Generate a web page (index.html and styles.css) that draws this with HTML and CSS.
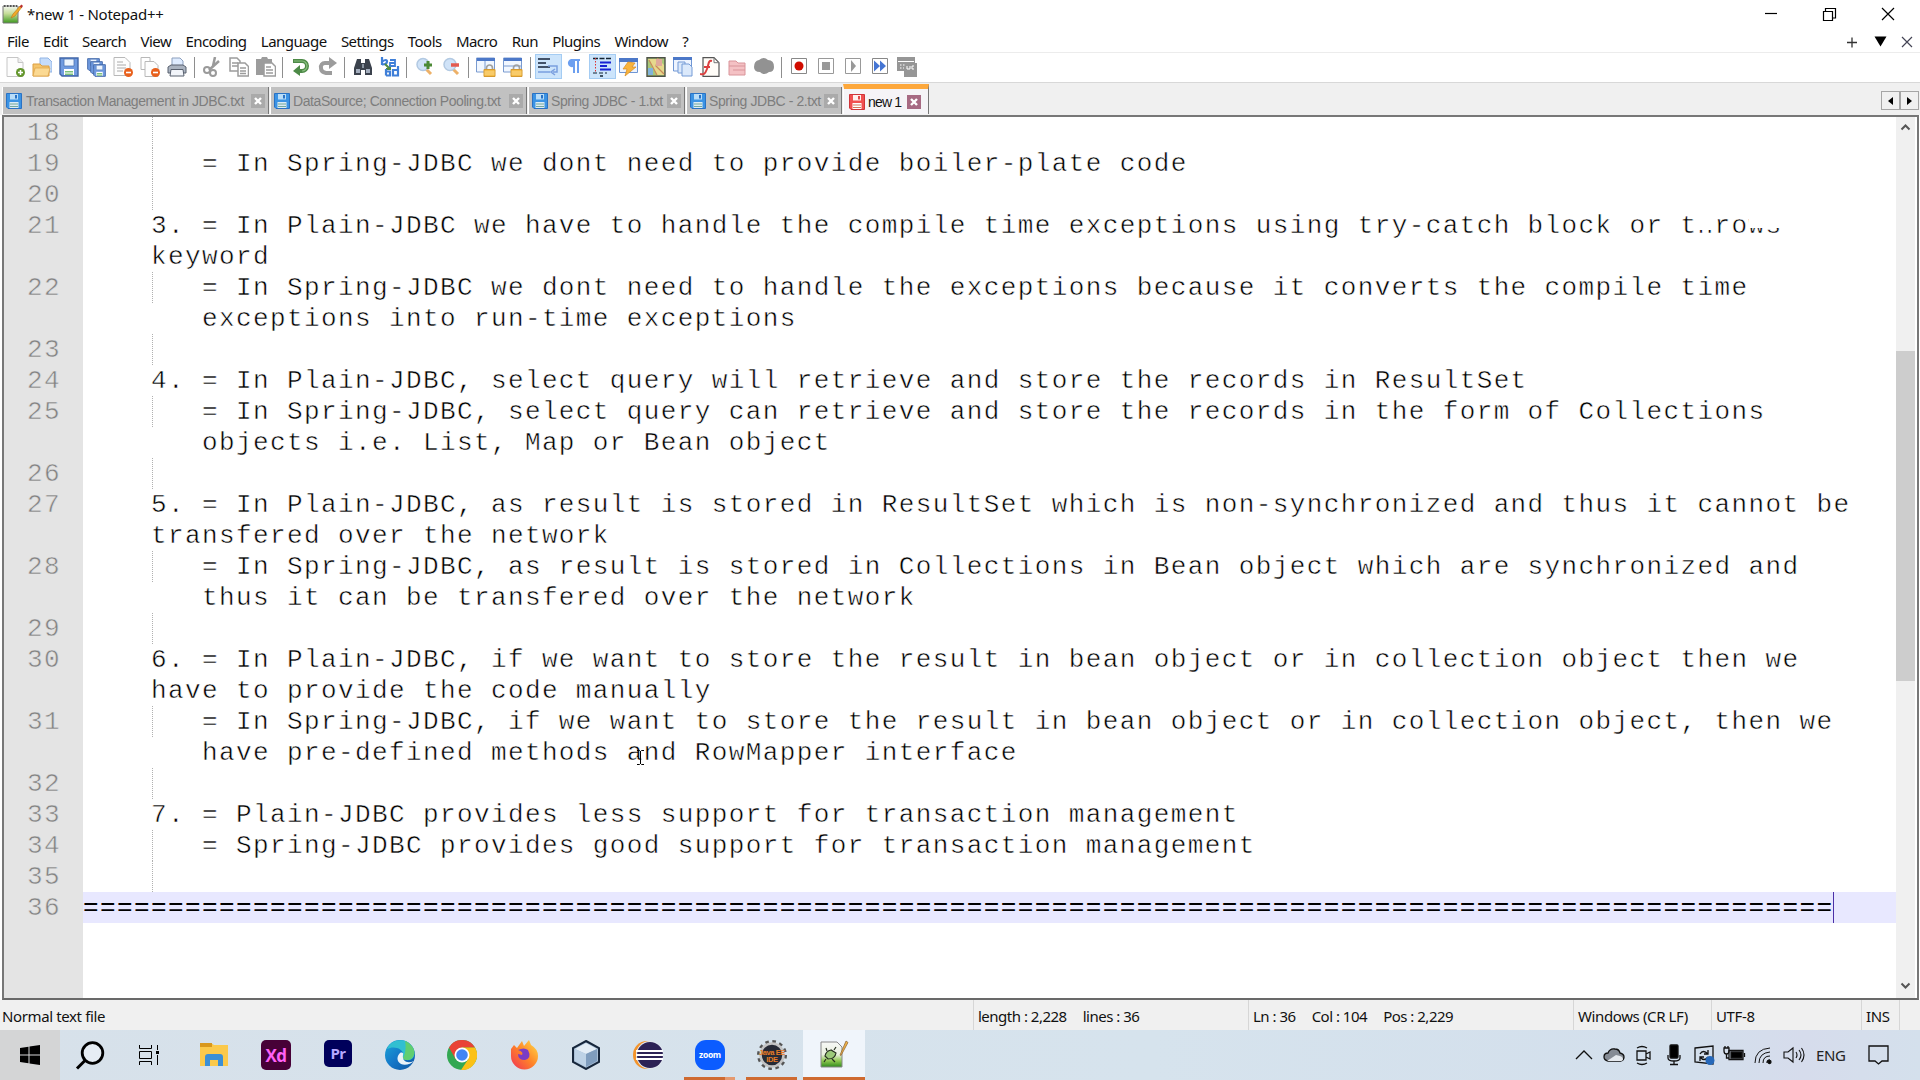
FILE: index.html
```html
<!DOCTYPE html>
<html lang="en">
<head>
<meta charset="utf-8">
<title>*new 1 - Notepad++</title>
<link rel="stylesheet" href="styles.css">
</head>
<body>
<svg class="defs" width="0" height="0">
  <defs>
    <linearGradient id="gGreen" x1="0" y1="0" x2="0" y2="1"><stop offset="0" stop-color="#f4f7f2"/><stop offset=".45" stop-color="#c5dc98"/><stop offset="1" stop-color="#3f9a20"/></linearGradient>
    <linearGradient id="gPage" x1="0" y1="0" x2="0" y2="1"><stop offset="0" stop-color="#f6f8f6"/><stop offset=".5" stop-color="#eaf0e0"/><stop offset=".75" stop-color="#8fc850"/><stop offset="1" stop-color="#2f8a1c"/></linearGradient>
    <linearGradient id="gEdge" x1="0" y1="0" x2="1" y2="1"><stop offset="0" stop-color="#1aa6d8"/><stop offset=".5" stop-color="#1577c8"/><stop offset="1" stop-color="#0d55a0"/></linearGradient>
    <linearGradient id="gFox" x1="1" y1="0" x2="0" y2="1"><stop offset="0" stop-color="#ffe04a"/><stop offset=".5" stop-color="#ff8428"/><stop offset="1" stop-color="#f03058"/></linearGradient>
    <symbol id="floppy" viewBox="0 0 20 20"><path d="M1 1h18v18H3l-2-2z" fill="#6f9ae0" stroke="#4066a8" stroke-width="1.4"/><path d="M5 2h10v7H5z" fill="#eef5fd" stroke="#4c73b5" stroke-width=".8"/><path d="M5 12h10v6H5z" fill="#fff"/><path d="M6 14h8v1.6H6zM6 16.5h8V18H6z" fill="#7cc17a"/></symbol>
    <symbol id="tabsave" viewBox="0 0 16 16"><path d="M.5.5h15v15H2l-1.500-1.500z" fill="#3b93e4" stroke="#2a72c4"/><path d="M4 1h8v5.500H4z" fill="#b9ddf8"/><path d="M9 2h2v3.500H9z" fill="#2a72c4"/><path d="M3.500 9h9v6h-9z" fill="#dcebf5"/><path d="M4 10.500h8v1H4zm0 2.500h8v1H4z" fill="#72a99c"/></symbol>
    <symbol id="tabdirty" viewBox="0 0 16 16"><path d="M.5.5h15v15H2l-1.500-1.500z" fill="#f05050" stroke="#d03438"/><path d="M4 1h8v5.500H4z" fill="#fff0ee"/><path d="M9 2h2v3.500H9z" fill="#e04848"/><path d="M3.500 9h9v6h-9z" fill="#fff"/><path d="M4 10.500h8v1H4zm0 2.500h8v1H4z" fill="#d2785c"/></symbol>
    <symbol id="cross" viewBox="0 0 14 14"><path d="M4 4l6 6m0-6l-6 6" stroke="#fff" stroke-width="2.400"/></symbol>
    <symbol id="lock" viewBox="0 0 12 13"><path d="M3 6V4a3 3 0 0 1 6 0v2" fill="none" stroke="#a0a0a0" stroke-width="1.700"/><path d="M.5 5.500h11v7H.5z" fill="#f5bd48" stroke="#d59a31"/><path d="M1 8h10M1 10h10" stroke="#fbd98b"/></symbol>
  </defs>
</svg>

<header class="titlebar">
  <svg class="app-icon" width="21" height="21" viewBox="0 0 21 21"><path d="M1 2h15v17H1z" fill="url(#gGreen)" stroke="#777"/><path d="M2 2h13" stroke="#555" stroke-width="2" stroke-dasharray="1.500 1.500"/><path d="M9 14l2-4 7-8 2 1-7 9z" fill="#f1aa29" stroke="#b97617" stroke-width=".6"/><path d="M17.500 2.500l2-2 1.500 1.500-1.500 2z" fill="#b93030"/></svg>
  <span class="title">*new 1 - Notepad++</span>
  <svg class="winctl" width="132" height="16" viewBox="0 0 132 16" fill="none" stroke="#000" stroke-width="1.200"><path d="M1 7.500h12"/><path d="M59.500 5.500h9v9h-9zM61.500 5.500v-3h10v9.500h-3"/><path d="M118 2l12 12m0-12l-12 12"/></svg>
</header>

<nav class="menubar">
  <span>File</span><span>Edit</span><span>Search</span><span>View</span><span>Encoding</span><span>Language</span><span>Settings</span><span>Tools</span><span>Macro</span><span>Run</span><span>Plugins</span><span>Window</span><span>?</span>
  <svg class="docctl" width="68" height="14" viewBox="0 0 68 14"><path d="M2 7.500h10m-5-5v10" stroke="#333" stroke-width="1.300"/><path d="M29.500 1.500h12l-6 10z"/><path d="M57 2l10 10m0-10L57 12" stroke="#445" stroke-width="1.200"/></svg>
</nav>

<div class="toolbar">
  <i><svg viewBox="0 0 20 20"><path d="M2 .5h11l5 5v14H2z" fill="#fdfdfd" stroke="#c6c6c6"/><path d="M13 .5v5h5" fill="#eee" stroke="#c6c6c6"/><circle cx="15.500" cy="15.500" r="4.500" fill="#63962c"/><path d="M15.500 13v5m-2.500-2.500h5" stroke="#fff" stroke-width="1.500"/></svg></i>
  <i><svg viewBox="0 0 20 20"><path d="M8 1h8l4 4v10H8z" fill="#c5dcfa" stroke="#92b4e4"/><path d="M1 7h7l2 2h7v10H1z" fill="#f4c56c" stroke="#dda043"/><path d="M1 19l2-8h15l-2 8z" fill="#fbd992" stroke="#dda043" stroke-width=".7"/></svg></i>
  <i><svg viewBox="0 0 20 20"><use href="#floppy"/></svg></i>
  <i><svg viewBox="0 0 20 20"><use href="#floppy" x="1" y="1" width="13" height="13"/><use href="#floppy" x="4" y="4" width="13" height="13"/><use href="#floppy" x="7" y="7" width="13" height="13"/></svg></i>
  <i><svg viewBox="0 0 20 20"><path d="M1 .5h11l5 5v13H1z" fill="#fdfdfd" stroke="#b8b8b8"/><path d="M4 5h6M4 8h9M4 11h9M4 14h6" stroke="#aaa"/><circle cx="15.500" cy="15.500" r="4.500" fill="#e8601c"/><path d="M13 15.500h5" stroke="#fff" stroke-width="1.600"/></svg></i>
  <i><svg viewBox="0 0 20 20"><path d="M1 .5h9v12H1z" fill="#fff" stroke="#b8b8b8"/><path d="M5 4.500h9l4 4v11H5z" fill="#fdfdfd" stroke="#b8b8b8"/><circle cx="15.500" cy="15.500" r="4.500" fill="#e8601c"/><path d="M13 15.500h5" stroke="#fff" stroke-width="1.600"/></svg></i>
  <i><svg viewBox="0 0 20 20"><path d="M5 9V1h8l3 3v5" fill="#dfecff" stroke="#8c9fbd"/><path d="M1 10l3-2h12l3 2v6H1z" fill="#aab3c0" stroke="#59616f"/><path d="M4 12.500h12l1 6.500H3z" fill="#f2f5fa" stroke="#59616f"/></svg></i>
  <b></b>
  <i><svg viewBox="0 0 20 20"><path d="M13 0l-2 9m6-5L7 13" stroke="#9a9a9a" stroke-width="2.500" fill="none"/><circle cx="5" cy="13" r="3" fill="none" stroke="#9a9a9a" stroke-width="2"/><circle cx="11" cy="16" r="3" fill="none" stroke="#9a9a9a" stroke-width="2"/></svg></i>
  <i><svg viewBox="0 0 20 20" fill="#fff" stroke="#9c9c9c" stroke-width="1.500"><path d="M1 1h7l3 3v10H1z"/><path d="M3 6h6M3 9h6"/><path d="M9 6h7l3.500 3.500V19H9z"/><path d="M11 11h6M11 14h6M11 16.500h6"/></svg></i>
  <i><svg viewBox="0 0 20 20"><path d="M0 2h5l1-2h5l1 2h4v16H0z" fill="#9c9c9c"/><path d="M8 6h8l3.500 3.500V19H8z" fill="#fff" stroke="#9c9c9c" stroke-width="1.500"/><path d="M10 10h5M10 13h7M10 16h7" stroke="#9c9c9c" stroke-width="1.500"/></svg></i>
  <b></b>
  <i><svg viewBox="0 0 20 20"><path d="M2 4h9a4.700 4.700 0 0 1 0 10H7" fill="none" stroke="#4d8a47" stroke-width="4"/><path d="M3 4h8a4.700 4.700 0 0 1 0 10" fill="none" stroke="#8abf80" stroke-width="1.200"/><path d="M9 8v11L2 14z" fill="#4d8a47"/></svg></i>
  <i><svg viewBox="0 0 20 20"><path d="M12 6H7a4 4 0 0 0-4 5q0 4 5 5h6" fill="none" stroke="#9c9c9c" stroke-width="4"/><path d="M11 0v12l8-6z" fill="#9c9c9c"/></svg></i>
  <b></b>
  <i><svg viewBox="0 0 20 20"><path d="M4 2h4v4h4V2h4l3 9v7h-7v-5H8v5H1v-7z" fill="#3b424d"/><path d="M3 12h4v4H3zm10 0h4v4h-4z" fill="#a3adbd"/><path d="M9 7h2v4H9z" fill="#89939f"/></svg></i>
  <i><svg viewBox="0 0 20 20" fill="none"><path d="M2 0v8M2 4.500q5-3 5 0t-5 3" stroke="#3f7fd8" stroke-width="2.200"/><path d="M5 7l5 5m0-4v4H6" stroke="#4e8b43" stroke-width="2"/><path d="M10 3h5v6h-5V6h5" stroke="#3f7fd8" stroke-width="1.800"/><path d="M6 18.500V12M6 14.500h4v4H6M18 9v9.500h-5V13h5" stroke="#3f7fd8" stroke-width="2.200"/></svg></i>
  <b></b>
  <i><svg viewBox="0 0 20 20"><path d="M11 12l5 5" stroke="#edb168" stroke-width="3"/><circle cx="8" cy="7.500" r="6" fill="#d0e3f8" stroke="#b2c9e2" stroke-width="1.500"/><path d="M13 4v8m-4-4h8" stroke="#4b8a35" stroke-width="3"/></svg></i>
  <i><svg viewBox="0 0 20 20"><path d="M11 12l5 5" stroke="#edb168" stroke-width="3"/><circle cx="8" cy="7.500" r="6" fill="#d0e3f8" stroke="#b2c9e2" stroke-width="1.500"/><path d="M9 8h8" stroke="#e35b50" stroke-width="3.500"/></svg></i>
  <b></b>
  <i><svg viewBox="0 0 20 20"><path d="M.5 1h18v14H.5z" fill="#f1f7ff" stroke="#7a9bd0"/><path d="M1 1h18v3H1z" fill="#4c78c8"/><path d="M9 4v11" stroke="#7a9bd0"/><use href="#lock" x="7" y="7" width="13" height="13"/></svg></i>
  <i><svg viewBox="0 0 20 20"><path d="M.5 1h18v14H.5z" fill="#f1f7ff" stroke="#7a9bd0"/><path d="M1 1h18v3H1z" fill="#4c78c8"/><path d="M1 9h17" stroke="#7a9bd0"/><use href="#lock" x="7" y="7" width="13" height="13"/></svg></i>
  <b></b>
  <i class="on"><svg viewBox="0 0 20 20" fill="none"><path d="M0 2h12M0 6h8M0 10h12" stroke="#15223a" stroke-width="1.700"/><path d="M0 15h12M10 9h9v6h-4" stroke="#7a9fdf" stroke-width="1.500"/><path d="M17 12l-4 3 4 3" stroke="#7a9fdf" stroke-width="1.500"/></svg></i>
  <i><svg viewBox="0 0 20 20"><path d="M6 2h9v2h-1v12h-2V4h-2v12H8V10a4 4 0 0 1-2-8" fill="#6c9ff0"/></svg></i>
  <i class="on"><svg viewBox="0 0 20 20"><path d="M1 1.500h18M8 19h3" stroke="#123" stroke-width="1.500" stroke-dasharray="5 1.500"/><path d="M8 5.500h11M8 9h7M8 12.500h11" stroke="#1622d4" stroke-width="2.200"/><path d="M3.500 1v14" stroke="#d33" stroke-dasharray="1.500 1.500"/><path d="M1 16h14" stroke="#123" stroke-dasharray="4 2"/></svg></i>
  <i><svg viewBox="0 0 20 20"><path d="M.5 1.500h18v14H.5z" fill="#edf4ff" stroke="#6f96d4"/><path d="M0 1h19v4H0z" fill="#4c78c8"/><path d="M9 5l7 1-3 4h4L6 19l2-7H4z" fill="#f8b43d" stroke="#d98b1f" stroke-width=".7"/></svg></i>
  <i><svg viewBox="0 0 20 20"><path d="M1 .7h18v18.600H1z" fill="#a9c878" stroke="#4d5148" stroke-width="1.400"/><path d="M2 2l9 16h7V8L12 2z" fill="#e6d98c"/><path d="M12 1l-2 8 8 8M3 3l8 15" stroke="#c98a5c" stroke-width="1.200" fill="none"/><path d="M10 2h6v7h-6z" fill="#dfa99a"/><path d="M2 11h5v7H2z" fill="#82b4da"/></svg></i>
  <i><svg viewBox="0 0 20 20"><path d="M.5 1h18v13H.5z" fill="#edf4ff" stroke="#6f96d4"/><path d="M0 0h19v3H0z" fill="#4c78c8"/><path d="M5 5h7v11H5z" fill="#dbe9fb" stroke="#759bd6"/><path d="M9 7h7l3 3v9H9z" fill="#dbe9fb" stroke="#759bd6"/></svg></i>
  <i><svg viewBox="0 0 20 20"><path d="M3 .7h11l5 5v13.600H3z" fill="#fffdf8" stroke="#555" stroke-width="1.200"/><path d="M14 .7v5h5" fill="none" stroke="#777"/><path d="M12 4c-4-1-3 3-5 8S4 18 0 17M4 10h6" stroke="#dc4040" stroke-width="2" fill="none"/></svg></i>
  <i><svg viewBox="0 0 20 20"><path d="M2 4h7l2 2h7v12H2z" fill="#f4c1c4" stroke="#d9949a"/><path d="M2 9h16M6 13h12" stroke="#d9949a"/></svg></i>
  <i><svg viewBox="0 0 20 20"><path d="M5 3q5-4 9 0 6 0 6 7 0 5-5 5-5 4-9 0-6 0-6-5 0-6 5-7z" fill="#929292"/></svg></i>
  <b></b>
  <i><svg viewBox="0 0 20 20"><path d="M2.500 1.500h15v15h-15z" fill="#fff" stroke="#888"/><circle cx="10" cy="9" r="4.500" fill="#d10c00"/></svg></i>
  <i><svg viewBox="0 0 20 20"><path d="M2.500 1.500h15v15h-15z" fill="#fff" stroke="#999"/><path d="M6 5h8v8H6z" fill="#999"/></svg></i>
  <i><svg viewBox="0 0 20 20"><path d="M2.500 1.500h15v15h-15z" fill="#fff" stroke="#999"/><path d="M8 3l5 6-5 6z" fill="#999"/></svg></i>
  <i><svg viewBox="0 0 20 20"><path d="M2.500 1.500h15v15h-15z" fill="#fff" stroke="#888"/><path d="M4 3.500L10 9l-6 5.500zM10 3.500L16 9l-6 5.500z" fill="#4575d3"/></svg></i>
  <i><svg viewBox="0 0 20 20"><path d="M0 0h18v6h2v14H7v-6H0z" fill="#969696"/><path d="M1 4.500h16" stroke="#fff"/><path d="M3 8h5M3 11h4" stroke="#fff" stroke-dasharray="1.500 1.500"/><path d="M10 9v3h3V9m4 0h-2v3h2" stroke="#fff" fill="none"/></svg></i>
</div>

<div class="tabs">
  <div class="tab t1"><svg class="ti"><use href="#tabsave"/></svg><span>Transaction Management in JDBC.txt</span><svg class="tx"><use href="#cross"/></svg></div>
  <div class="tab t2"><svg class="ti"><use href="#tabsave"/></svg><span>DataSource; Connection Pooling.txt</span><svg class="tx"><use href="#cross"/></svg></div>
  <div class="tab t3"><svg class="ti"><use href="#tabsave"/></svg><span>Spring JDBC - 1.txt</span><svg class="tx"><use href="#cross"/></svg></div>
  <div class="tab t4"><svg class="ti"><use href="#tabsave"/></svg><span>Spring JDBC - 2.txt</span><svg class="tx"><use href="#cross"/></svg></div>
  <div class="tab active"><svg class="ti"><use href="#tabdirty"/></svg><span>new 1</span><svg class="tx"><use href="#cross"/></svg></div>
  <div class="tabnav"><span><svg width="5" height="8"><path d="M5 0v8L0 4z"/></svg></span><span><svg width="5" height="8"><path d="M0 0v8l5-4z"/></svg></span></div>
</div>

<main class="editor">
  <div class="code">
    <div class="row g"><em>18</em><span></span></div>
    <div class="row g"><em>19</em><span>       = In Spring-JDBC we dont need to provide boiler-plate code</span></div>
    <div class="row g"><em>20</em><span></span></div>
    <div class="row"><em>21</em><span>    3. = In Plain-JDBC we have to handle the compile time exceptions using try-catch block or t<u class="fade">h</u>ro<u class="fade low">ws</u></span></div>
    <div class="row"><em></em><span>    keyword</span></div>
    <div class="row g"><em>22</em><span>       = In Spring-JDBC we dont need to handle the exceptions because it converts the compile time</span></div>
    <div class="row"><em></em><span>       exceptions into run-time exceptions</span></div>
    <div class="row g"><em>23</em><span></span></div>
    <div class="row"><em>24</em><span>    4. = In Plain-JDBC, select query will retrieve and store the records in ResultSet</span></div>
    <div class="row g"><em>25</em><span>       = In Spring-JDBC, select query can retrieve and store the records in the form of Collections</span></div>
    <div class="row"><em></em><span>       objects i.e. List, Map or Bean object</span></div>
    <div class="row g"><em>26</em><span></span></div>
    <div class="row"><em>27</em><span>    5. = In Plain-JDBC, as result is stored in ResultSet which is non-synchronized and thus it cannot be</span></div>
    <div class="row"><em></em><span>    transfered over the network</span></div>
    <div class="row g"><em>28</em><span>       = In Spring-JDBC, as result is stored in Collections in Bean object which are synchronized and</span></div>
    <div class="row"><em></em><span>       thus it can be transfered over the network</span></div>
    <div class="row g"><em>29</em><span></span></div>
    <div class="row"><em>30</em><span>    6. = In Plain-JDBC, if we want to store the result in bean object or in collection object then we</span></div>
    <div class="row"><em></em><span>    have to provide the code manually</span></div>
    <div class="row g"><em>31</em><span>       = In Spring-JDBC, if we want to store the result in bean object or in collection object, then we</span></div>
    <div class="row"><em></em><span>       have pre-defined methods and RowMapper interface</span></div>
    <div class="row g"><em>32</em><span></span></div>
    <div class="row"><em>33</em><span>    7. = Plain-JDBC provides less support for transaction management</span></div>
    <div class="row g"><em>34</em><span>       = Spring-JDBC provides good support for transaction management</span></div>
    <div class="row g"><em>35</em><span></span></div>
    <div class="row current"><em>36</em><span>=======================================================================================================<u class="caret"></u></span></div>
    <svg class="ibeam" width="9" height="17" viewBox="0 0 9 17" fill="none" stroke="#000"><path d="M1 1.500h2.500l1 1 1-1H8M4.500 2v13M1 15.500h2.500l1-1 1 1H8"/></svg>
  </div>
  <div class="scroll">
    <svg width="11" height="8" viewBox="0 0 11 8"><path d="M1.500 6.500l4-4 4 4" fill="none" stroke="#555" stroke-width="2"/></svg>
    <div class="thumb"></div>
    <svg width="11" height="8" viewBox="0 0 11 8"><path d="M1.500 1.500l4 4 4-4" fill="none" stroke="#555" stroke-width="2"/></svg>
  </div>
</main>

<footer class="status">
  <div class="p1">Normal text file</div>
  <div class="p2"><span>length : 2,228</span><span>lines : 36</span></div>
  <div class="p3"><span>Ln : 36</span><span>Col : 104</span><span>Pos : 2,229</span></div>
  <div class="p4">Windows (CR LF)</div>
  <div class="p5">UTF-8</div>
  <div class="p6">INS</div>
  <div class="p7"></div>
</footer>

<div class="taskbar">
  <div class="sys start"><svg width="20" height="20" viewBox="0 0 20 20"><path d="M0 3l8.500-1.300v7.800H0zM9.500 1.500L20 0v9.500H9.500zM0 10.500h8.500v7.800L0 17zM9.500 10.500H20V20L9.500 18.500z"/></svg></div>
  <div class="sys"><svg width="30" height="30" viewBox="0 0 30 30"><circle cx="17.500" cy="13" r="10.300" fill="#e6edf4" stroke="#000" stroke-width="2.800"/><path d="M10 20.500L2 28.500" stroke="#000" stroke-width="3"/></svg></div>
  <div class="sys"><svg width="22" height="20" viewBox="0 0 22 20" fill="none" stroke="#000" stroke-width="1"><path d="M1.500 0v3.500h12V0M1.500 20v-3.500h12V20M1.500 6.500h12v7h-12zM19.500 0v5M19.500 10v10"/><path d="M18 6h3v3h-3z" fill="#000" stroke="none"/></svg></div>
  <div class="app"><svg viewBox="0 0 30 30"><path d="M1 3h11l3 2h14v21H1z" fill="#fbc94b"/><path d="M1 3h12v4H1z" fill="#d9981d"/><path d="M6 26V17q0-3 3-3h12q3 0 3 3v9h-5v-6h-8v6z" fill="#3b8fd6"/></svg></div>
  <div class="app"><svg viewBox="0 0 30 30"><rect width="30" height="30" rx="5" fill="#470137"/><text x="15" y="21.500" text-anchor="middle" class="adobe xd">Xd</text></svg></div>
  <div class="app"><svg viewBox="0 0 30 30"><rect x="1" width="28" height="27" rx="5" fill="#00005b"/><text x="15" y="19" text-anchor="middle" class="adobe pr">Pr</text></svg></div>
  <div class="app"><svg viewBox="0 0 30 30"><circle cx="15" cy="15" r="15" fill="url(#gEdge)"/><path d="M2 9C6-2 23-3 28 8c4 8-1 13-7 12-4-1-4-3-3-5 1-6-9-10-16-6z" fill="#31bfd1"/><path d="M20 1c10 4 12 14 6 18-3 2-8 1-8-1 3-5 3-13 2-17z" fill="#60ce70"/><path d="M18 15c-1 6 4 9 11 6-3 3-9 5-13 3-5-3-4-8-1-11 2-1 4 0 3 2z" fill="#e9f2f8"/></svg></div>
  <div class="app"><svg viewBox="0 0 30 30"><circle cx="15" cy="15" r="15" fill="#33a852"/><path d="M2 7.500A15 15 0 0 1 28 7.500H15L8.500 19z" fill="#e94335"/><path d="M28 7.500A15 15 0 0 1 14 30l7.500-11.300L15 7.500z" fill="#fbc116"/><circle cx="15" cy="15" r="7.500" fill="#fff"/><circle cx="15" cy="15" r="5.800" fill="#4285f4"/></svg></div>
  <div class="app"><svg viewBox="0 0 30 30"><path d="M2 9l3-4 3 3 5-7 2 5 5-6 2 5q7 4 7 11a13.500 13.500 0 0 1-27 0q0-4 0-7z" fill="url(#gFox)"/><path d="M9 10q6-3 10 0 4 8-3 10-7 0-7-6l4 1q2-3-4-5z" fill="#7a3cc5"/></svg></div>
  <div class="app"><svg viewBox="0 0 30 30" stroke="#16263b" stroke-width="2"><path d="M15 1l13 7v14l-13 7-13-7V8z" fill="#a9bfd6"/><path d="M4 9l11 5 11-5-11-6z" fill="#e3edf6" stroke="none"/><path d="M15 14v13l11-6V9z" fill="#7f9dbe" stroke="none"/><path d="M15 14v13L4 21V9z" fill="#bdd2e6" stroke="none"/></svg></div>
  <div class="app"><svg viewBox="0 0 30 30"><circle cx="14" cy="15" r="14" fill="#f3942c"/><circle cx="17" cy="15" r="14" fill="#dfe7ef"/><circle cx="17" cy="15" r="13" fill="#2c2255"/><path d="M3 11h27M3 15h27M3 19h27" stroke="#fff" stroke-width="1.800"/></svg></div>
  <div class="app run"><svg viewBox="0 0 30 30"><rect width="30" height="30" rx="11" fill="#0b5cff"/><text x="15" y="18" text-anchor="middle" class="zoom">zoom</text></svg><s class="more"></s></div>
  <div class="app run"><svg viewBox="0 0 30 30"><circle cx="15" cy="15" r="13" fill="none" stroke="#555" stroke-width="4" stroke-dasharray="3.400 3.400"/><circle cx="15" cy="15" r="11.500" fill="#262a36" stroke="#c4c4c4" stroke-width="2.500"/><text x="15" y="14.500" text-anchor="middle" class="jee">Java EE</text><text x="15" y="22" text-anchor="middle" class="jee">IDE</text></svg><s></s></div>
  <div class="app run current-app"><svg viewBox="0 0 30 30"><path d="M2 2h16l5 5v20H2z" fill="url(#gPage)" stroke="#888"/><path d="M6 16q1-5 6-6l5 3q-1 6-8 6zM8 11l-1-3m8 2l2-3M7 19l-2 3m8-3l3 3" fill="#9cc97a" stroke="#263020" stroke-width="1.200"/><path d="M21 15l6-14 2 1.500-7 13z" fill="#eeb147" stroke="#8a6030" stroke-width=".7"/></svg><s></s></div>
  <div class="tray">
    <svg viewBox="0 0 24 24"><path d="M4 16l8-8 8 8"/></svg>
    <svg viewBox="0 0 24 24"><path d="M6 18q-4-1-4-4 0-4 4-4 2-5 7-4 4 0 5 4 4 1 4 4 0 3-3 4z" fill="#858b94"/><path d="M5 18l9-6q7 1 7 4 0 2-3 2z" fill="#e5e9ee" stroke="none"/></svg>
    <svg viewBox="0 0 24 24"><path d="M5 8h9v9H5zM14 11l4-2v7l-4-2M5 5q5-3 10 0M5 20q5 3 10 0"/></svg>
    <svg viewBox="0 0 24 24"><rect x="8" y="2" width="8" height="13" rx="1" fill="#000"/><path d="M6 12v3q0 3 6 3t6-3v-3M12 18v4M8 21.500h8"/></svg>
    <svg viewBox="0 0 24 24"><path d="M3 5l18-2v18L3 19zM8 11q3-5 8 0m0-4v4h-4M16 14q-4 5-8 0m0 4v-4h4"/><circle cx="18" cy="17.500" r="4.500" fill="#2668b9" stroke="none"/></svg>
    <svg viewBox="0 0 24 24"><path d="M7 7.500h14v9H7z"/><path d="M9 9h11v6H9z" fill="#000"/><path d="M22.500 10v4M2 5v3q0 3 2.500 3T7 8V5zM3 5V3m3 2V3M4.500 11v4H7"/></svg>
    <svg viewBox="0 0 24 24"><path d="M3 20Q3 6 18 5M7 20q0-10 11-11M11 20q0-7 7-7" stroke-width="1"/><path d="M15 20q0-3 3-3"/><circle cx="17.500" cy="19" r="1.500" fill="#000"/></svg>
    <svg viewBox="0 0 24 24"><path d="M2 9h4l5-4v14l-5-4H2zM14 9q2 3 0 6M17 7q4 5 0 10M19.500 5q5 7 0 14" stroke-width="1.100"/></svg>
    <span class="lang">ENG</span>
    <svg viewBox="0 0 24 24" class="note"><path d="M2 3h19v15h-6l-3.500 3L8 18H2z"/></svg>
  </div>
</div>
</body>
</html>
```
FILE: styles.css
```css
* { box-sizing: border-box; }
body {
  margin: 0;
  width: 1920px;
  height: 1080px;
  overflow: hidden;
  display: flex;
  flex-direction: column;
  background: #fff;
  color: #111;
  font: 15px/20px "Noto Sans", "Open Sans", sans-serif;
}
svg { display: block; flex: none; }
.defs { position: absolute; }

.titlebar { height: 30px; display: flex; align-items: flex-start; padding: 4px 24px 0 2px; }
.title { margin: 0 0 0 4px; letter-spacing: -.24px; }
.winctl { margin: 2px 0 0 auto; }

.menubar { height: 23px; display: flex; padding: 1px 7px 0 7px; border-bottom: 1px solid #ececec; letter-spacing: -.55px; }
.menubar span { margin-right: 14.300px; }
.docctl { margin: 4px 0 0 auto; }

.toolbar { height: 30px; display: flex; padding: 1px 0 0 1.500px; border-bottom: 1px solid #d8d8d8; }
.toolbar i { width: 27px; height: 25px; display: flex; align-items: center; justify-content: center; }
.toolbar i svg { width: 20px; height: 20px; }
.toolbar b { width: 7.900px; height: 21px; margin-top: 3px; background: linear-gradient(#8e8e8e, #8e8e8e) 3px 0 / 1px 100% no-repeat; }
.toolbar .on { background: #cce4fb; outline: 1px solid #a4ccf3; outline-offset: -1px; }

.tabs { height: 32px; display: flex; align-items: flex-end; padding: 0 1px 1px 2px; background: #f0f0f0; font: 14px/18px "Liberation Sans", Arial, sans-serif; }
.tab { height: 27px; display: flex; align-items: center; background: #c1c1c1; color: #7d7d7d; border-left: 1px solid #fff; border-right: 1px solid #777; padding: 1px 3px 0; letter-spacing: -.42px; white-space: nowrap; margin-right: 1px; }
.tab span { margin-left: 4px; }
.t2 span, .t3 span, .t4 span { margin-left: 3px; }
.ti { width: 16px; height: 16px; }
.tx { width: 14px; height: 14px; margin-left: auto; background: #aaa; }
.t1 { width: 267px; }
.t2 { width: 257px; }
.t3 { width: 157px; }
.t4 { width: 156px; }
.tab.active { width: 86px; height: 30px; background: #f5f4f7; color: #111; border-top: 5px solid #fda83c; padding: 0 7px 0 5px; margin: 0; }
.active span { margin-left: 3px; letter-spacing: -.8px; }
.active .tx { background: #a76a83; }
.tabnav { display: flex; margin: 0 0 4px auto; }
.tabnav span { width: 19px; height: 19px; border: 1px solid #a5a5a5; display: flex; align-items: center; justify-content: center; }

.editor { height: 885px; display: flex; border: 2px solid #707070; border-color: #777 #777 #696969; margin: 0 1px 0 2px; background: #fff; }
.code { position: relative; flex: 1; overflow: hidden; background: linear-gradient(90deg, #e4e4e4 79px, #fff 79px); font: 26px/31px "Liberation Mono", "Courier New", monospace; letter-spacing: 1.393px; }
.row { height: 31px; display: flex; white-space: pre; line-height: 33px; }
.row em { width: 79px; padding-left: 23px; font-style: normal; color: #828282; -webkit-text-stroke: .5px #e4e4e4; }
.row span { flex: 1; color: #000; -webkit-text-stroke: .5px #fff; }
.row.g span { background: repeating-linear-gradient(#b0b0b0 0 1px, transparent 1px 2px) 69px 0 / 1px 100% no-repeat; }
.row.current span { background: #e8e8ff; -webkit-text-stroke: 0; }
u { text-decoration: none; }
.fade { position: relative; }
.fade::after { content: ""; position: absolute; left: 0; right: 0; top: 0; height: 19px; background: #fff; }
.fade.low::after { height: 17px; }
.caret { display: inline-block; width: 1px; height: 31px; background: #4b30a8; vertical-align: top; margin-left: -1px; }
.ibeam { position: absolute; left: 632px; top: 632px; }
.scroll { width: 21px; background: #f0f0f0; border-right: 2px solid #fff; display: flex; flex-direction: column; align-items: center; padding: 6px 0 8px; }
.thumb { width: 19px; height: 330px; margin: 220px 0 auto; background: #cdcdcd; }

.status { height: 30px; display: flex; background: #f0f0f0; letter-spacing: -.38px; line-height: 32px; white-space: nowrap; }
.status div { padding-left: 4px; border-left: 1px solid #d6d6d6; }
.status .p1 { width: 973px; padding-left: 2px; border: 0; }
.p2 { width: 275px; }
.p3 { width: 325px; }
.p4 { width: 138px; }
.p5 { width: 150px; }
.p6 { width: 38px; }
.p7 { flex: 1; }
.p2 span, .p3 span { margin-right: 16px; letter-spacing: -.5px; }

.taskbar { height: 50px; display: flex; background: linear-gradient(90deg, #d7e1ea, #d6e3ed 60%, #d3dfec 88%, #d6dcec 94%, #d4e0ec); }
.sys { width: 59px; display: flex; align-items: center; justify-content: center; }
.start { background: #d4d5d6; width: 60px; }
.sys + .app { margin-left: 5px; }
.app { width: 62px; position: relative; display: flex; align-items: center; justify-content: center; }
.app svg { width: 30px; height: 30px; }
.current-app { background: #f0f5fb; }
.app s { position: absolute; left: 5px; right: 6px; bottom: 0; height: 3px; background: #cf6a30; }
.app s.more { background: linear-gradient(90deg, #cf6a30 41px, #e59a70 41px); }
.current-app s { left: 0; right: 0; }
.adobe { font: bold 17px "Open Sans", sans-serif; letter-spacing: -.5px; }
.xd { fill: #ff61f6; }
.pr { fill: #b7a8ff; font-size: 15px; }
.zoom { font: bold 8.500px "Open Sans", sans-serif; fill: #fff; letter-spacing: -.3px; }
.jee { font: bold 7.500px "Liberation Sans", sans-serif; fill: #e67b26; letter-spacing: -.4px; }
.tray { margin-left: auto; display: flex; align-items: center; width: 348px; padding-right: 5px; }
.tray svg { width: 24px; height: 24px; margin-right: 6px; fill: none; stroke: #111; stroke-width: 1.300; }
.lang { font-size: 15px; letter-spacing: -.4px; width: 32px; margin: 0 19px 0 4px; color: #222; }
.tray .note { margin: 0 auto 0 0; }
```
